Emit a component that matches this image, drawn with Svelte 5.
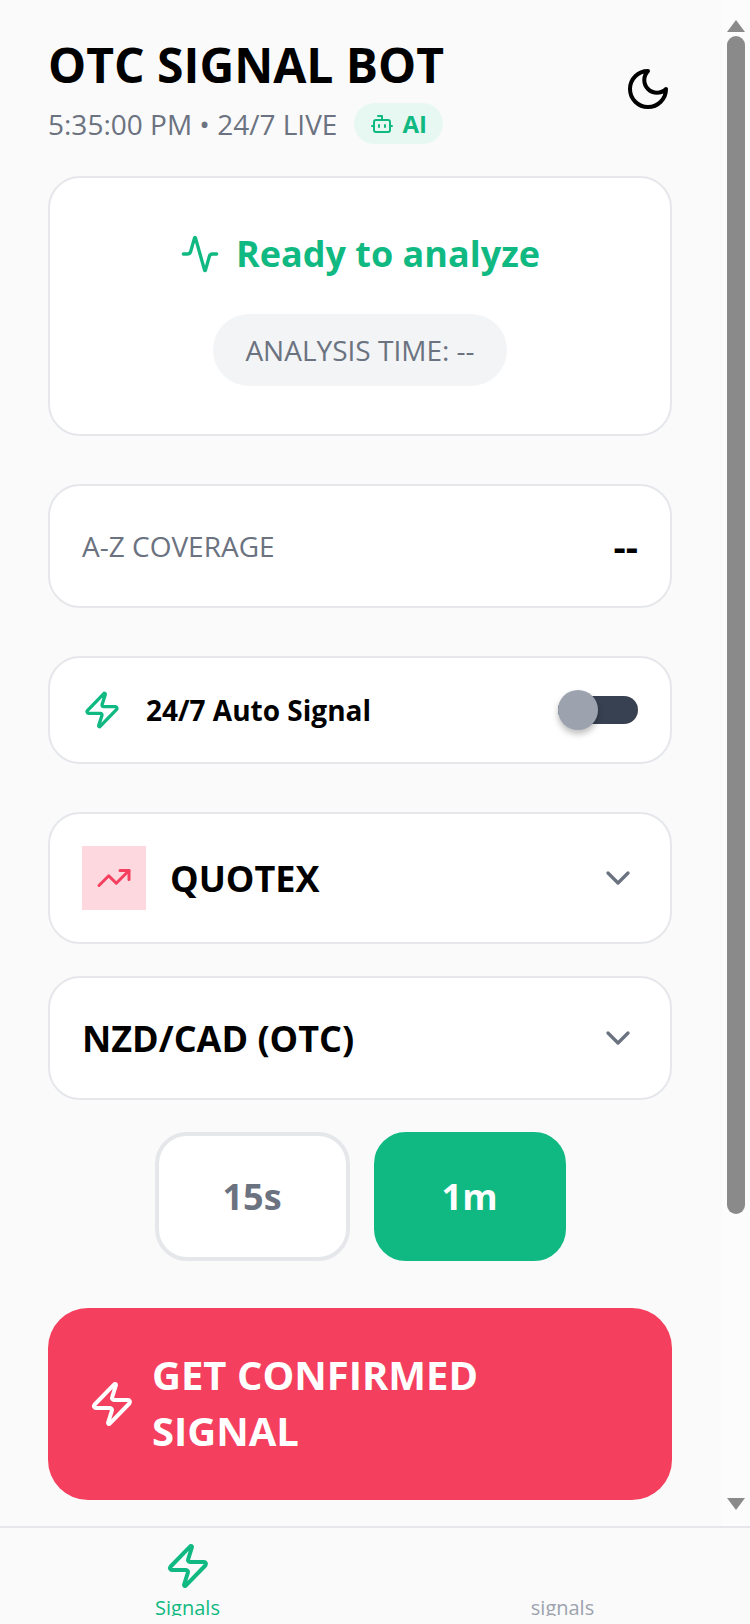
<script lang="ts">
  let durations = [
    { label: '15s', active: false },
    { label: '1m', active: true }
  ];
</script>

<div class="app">
  <div class="scroll-area">
    <main class="content">
      <header class="header">
        <div>
          <h1>OTC SIGNAL BOT</h1>
          <div class="sub">
            <span>5:35:00 PM • 24/7 LIVE</span>
            <span class="ai-pill">
              <svg class="icon" width="24" height="24" viewBox="0 0 24 24" stroke-width="2">
                <path d="M12 8V4H8" />
                <rect width="16" height="12" x="4" y="8" rx="2" />
                <path d="M2 14h2" />
                <path d="M20 14h2" />
                <path d="M15 13v2" />
                <path d="M9 13v2" />
              </svg>
              AI
            </span>
          </div>
        </div>
        <svg class="icon moon" width="48" height="48" viewBox="0 0 24 24" stroke-width="2">
          <path d="M12 3a6 6 0 0 0 9 9 9 9 0 1 1-9-9Z" />
        </svg>
      </header>

      <section class="card status">
        <div class="status-title">
          <svg class="icon" width="40" height="40" viewBox="0 0 24 24" stroke-width="2">
            <path d="M22 12h-2.48a2 2 0 0 0-1.93 1.46l-2.35 8.36a.25.25 0 0 1-.48 0L9.24 2.18a.25.25 0 0 0-.48 0l-2.35 8.36A2 2 0 0 1 4.49 12H2" />
          </svg>
          Ready to analyze
        </div>
        <div class="time-pill">ANALYSIS TIME: --</div>
      </section>

      <section class="card coverage">
        <span class="coverage-label">A-Z COVERAGE</span>
        <span class="coverage-value">--</span>
      </section>

      <section class="card auto">
        <div class="auto-left">
          <svg class="icon zap" width="40" height="40" viewBox="0 0 24 24" stroke-width="2">
            <path d="M4 14a1 1 0 0 1-.78-1.63l9.9-10.2a.5.5 0 0 1 .86.46l-1.92 6.02A1 1 0 0 0 13 10h7a1 1 0 0 1 .78 1.63l-9.9 10.2a.5.5 0 0 1-.86-.46l1.92-6.02A1 1 0 0 0 11 14z" />
          </svg>
          <span>24/7 Auto Signal</span>
        </div>
        <div class="toggle"><span class="thumb"></span></div>
      </section>

      <section class="card select broker">
        <div class="broker-left">
          <span class="broker-logo">
            <svg class="icon" width="36" height="36" viewBox="0 0 24 24" stroke-width="2">
              <path d="M22 7 13.5 15.5 8.5 10.5 2 17" />
              <path d="M16 7h6v6" />
            </svg>
          </span>
          <span>QUOTEX</span>
        </div>
        <svg class="icon chevron" width="40" height="40" viewBox="0 0 24 24" stroke-width="2">
          <path d="m6 9 6 6 6-6" />
        </svg>
      </section>

      <section class="card select pair">
        <span>NZD/CAD (OTC)</span>
        <svg class="icon chevron" width="40" height="40" viewBox="0 0 24 24" stroke-width="2">
          <path d="m6 9 6 6 6-6" />
        </svg>
      </section>

      <div class="durations">
        {#each durations as d}
          <button class="duration" class:active={d.active}>{d.label}</button>
        {/each}
      </div>

      <button class="cta">
        <svg class="icon" width="48" height="48" viewBox="0 0 24 24" stroke-width="2">
          <path d="M4 14a1 1 0 0 1-.78-1.63l9.9-10.2a.5.5 0 0 1 .86.46l-1.92 6.02A1 1 0 0 0 13 10h7a1 1 0 0 1 .78 1.63l-9.9 10.2a.5.5 0 0 1-.86-.46l1.92-6.02A1 1 0 0 0 11 14z" />
        </svg>
        <span class="cta-label">GET CONFIRMED SIGNAL</span>
      </button>
    </main>

    <div class="scrollbar">
      <span class="arrow up"></span>
      <span class="thumb-bar"></span>
      <span class="arrow down"></span>
    </div>
  </div>

  <nav class="nav">
    <div class="nav-item active">
      <svg class="icon" width="48" height="48" viewBox="0 0 24 24" stroke-width="2">
        <path d="M4 14a1 1 0 0 1-.78-1.63l9.9-10.2a.5.5 0 0 1 .86.46l-1.92 6.02A1 1 0 0 0 13 10h7a1 1 0 0 1 .78 1.63l-9.9 10.2a.5.5 0 0 1-.86-.46l1.92-6.02A1 1 0 0 0 11 14z" />
      </svg>
      <span>Signals</span>
    </div>
    <div class="nav-item">
      <span class="nav-blank"></span>
      <span>signals</span>
    </div>
  </nav>
</div>

<style>
:global(body) {
  margin: 0;
  background: #fafafa;
}
.app {
  width: 750px;
  height: 1624px;
  display: flex;
  flex-direction: column;
  overflow: hidden;
  font-family: "Open Sans", sans-serif;
  color: #000;
  background: #fafafa;
}
.icon {
  fill: none;
  stroke: currentColor;
  stroke-linecap: round;
  stroke-linejoin: round;
  flex-shrink: 0;
}
.scroll-area {
  flex: 1;
  display: flex;
  min-height: 0;
}
.content {
  flex: 1;
  padding: 33px 50px 0 48px;
  display: flex;
  flex-direction: column;
  min-width: 0;
}
.header {
  display: flex;
  justify-content: space-between;
  align-items: center;
  margin-bottom: 32px;
}
h1 {
  margin: 0;
  font-size: 48px;
  line-height: 64px;
  font-weight: 700;
}
.sub {
  display: flex;
  align-items: center;
  gap: 17px;
  margin-top: 6px;
  font-size: 28px;
  color: #6b7280;
}
.ai-pill {
  display: flex;
  align-items: center;
  gap: 8px;
  padding: 4px 16px;
  border-radius: 999px;
  background: #e7f8f2;
  color: #10b981;
  font-size: 24px;
  font-weight: 700;
}
.card {
  background: #fff;
  border: 2px solid #e5e7eb;
  border-radius: 32px;
  box-sizing: border-box;
}
.status {
  height: 260px;
  display: flex;
  flex-direction: column;
  align-items: center;
  justify-content: center;
  gap: 32px;
  margin-bottom: 48px;
}
.status-title {
  display: flex;
  align-items: center;
  gap: 16px;
  color: #10b981;
  font-size: 36px;
  line-height: 56px;
  font-weight: 700;
}
.time-pill {
  padding: 16px 32px;
  border-radius: 999px;
  background: #f3f4f6;
  color: #6b7280;
  font-size: 28px;
  line-height: 40px;
}
.coverage {
  height: 124px;
  display: flex;
  align-items: center;
  justify-content: space-between;
  padding: 0 32px;
  margin-bottom: 48px;
}
.coverage-label { font-size: 28px; color: #6b7280; }
.coverage-value { font-size: 38px; font-weight: 700; }
.auto {
  height: 108px;
  display: flex;
  align-items: center;
  justify-content: space-between;
  padding: 0 32px;
  margin-bottom: 48px;
}
.auto-left {
  display: flex;
  align-items: center;
  gap: 24px;
  font-size: 28px;
  font-weight: 700;
}
.zap { color: #10b981; }
.toggle {
  width: 80px;
  height: 28px;
  border-radius: 14px;
  background: #374151;
  position: relative;
}
.thumb {
  position: absolute;
  left: 0;
  top: -6px;
  width: 40px;
  height: 40px;
  border-radius: 50%;
  background: #9ca3af;
  box-shadow: 0 4px 6px rgba(0, 0, 0, 0.25);
}
.select {
  display: flex;
  align-items: center;
  justify-content: space-between;
  padding: 0 32px;
  font-size: 36px;
  font-weight: 700;
}
.broker { height: 132px; margin-bottom: 32px; }
.broker-left { display: flex; align-items: center; gap: 24px; }
.broker-logo {
  width: 64px;
  height: 64px;
  background: #fdd9df;
  color: #f43f5e;
  display: flex;
  align-items: center;
  justify-content: center;
}
.chevron { color: #6b7280; }
.pair { height: 124px; margin-bottom: 32px; }
.durations {
  display: flex;
  justify-content: center;
  gap: 24px;
  margin-bottom: 47px;
}
.duration {
  height: 129px;
  padding: 0 64px;
  border: 4px solid #e5e7eb;
  border-radius: 32px;
  background: #fff;
  color: #6b7280;
  font: 700 36px "Open Sans", sans-serif;
}
.duration.active {
  border-color: #10b981;
  background: #10b981;
  color: #fff;
}
.cta {
  height: 192px;
  display: flex;
  align-items: center;
  gap: 16px;
  padding: 0 48px 0 40px;
  border: 0;
  border-radius: 40px;
  background: #f43f5e;
  color: #fff;
  font: 700 40px/56px "Open Sans", sans-serif;
  text-align: left;
}
.cta-label { padding-bottom: 2px; }
.scrollbar {
  width: 28px;
  display: flex;
  flex-direction: column;
  align-items: center;
  background: #fcfcfc;
  padding-top: 20px;
}
.arrow {
  width: 0;
  height: 0;
  border-left: 9px solid transparent;
  border-right: 9px solid transparent;
}
.arrow.up { border-bottom: 12px solid #8a8a8a; }
.arrow.down { border-top: 12px solid #8a8a8a; margin-top: auto; margin-bottom: 16px; }
.thumb-bar {
  width: 18px;
  height: 1178px;
  margin-top: 4px;
  border-radius: 9px;
  background: #8a8a8a;
}
.nav {
  height: 98px;
  flex-shrink: 0;
  box-sizing: border-box;
  border-top: 2px solid #e5e7eb;
  padding-bottom: 8px;
  display: flex;
  background: #fafafa;
}
.nav-item {
  flex: 1;
  display: flex;
  flex-direction: column;
  align-items: center;
  overflow: hidden;
  padding-top: 14px;
  gap: 4px;
  font-size: 20px;
  color: #9ca3af;
}
.nav-item.active { color: #10b981; }
.nav-blank { height: 48px; flex-shrink: 0; }
</style>
